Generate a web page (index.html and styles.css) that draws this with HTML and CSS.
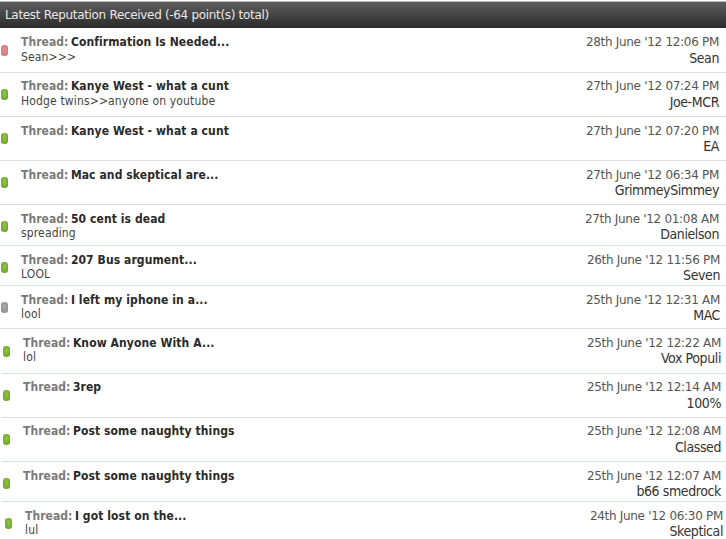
FILE: index.html
```html
<!DOCTYPE html>
<html lang="en">
<head>
<meta charset="utf-8">
<title>Latest Reputation Received</title>
<link rel="stylesheet" href="styles.css">
</head>
<body>
<div class="panel">
  <div class="head">Latest Reputation Received (-64 point(s) total)</div>
  <div class="row r1"><span class="pip neg"></span><div class="main"><div class="title"><span class="lbl">Thread:</span> <b>Confirmation Is Needed...</b></div><div class="note">Sean&gt;&gt;&gt;</div></div><div class="meta"><div class="date">28th June '12 12:06 PM</div><div class="who">Sean</div></div></div>
  <div class="row r2"><span class="pip pos"></span><div class="main"><div class="title"><span class="lbl">Thread:</span> <b>Kanye West - what a cunt</b></div><div class="note">Hodge twins&gt;&gt;anyone on youtube</div></div><div class="meta"><div class="date">27th June '12 07:24 PM</div><div class="who">Joe-MCR</div></div></div>
  <div class="row r3"><span class="pip pos"></span><div class="main"><div class="title"><span class="lbl">Thread:</span> <b>Kanye West - what a cunt</b></div></div><div class="meta"><div class="date">27th June '12 07:20 PM</div><div class="who">EA</div></div></div>
  <div class="row r4"><span class="pip pos"></span><div class="main"><div class="title"><span class="lbl">Thread:</span> <b>Mac and skeptical are...</b></div></div><div class="meta"><div class="date">27th June '12 06:34 PM</div><div class="who">GrimmeySimmey</div></div></div>
  <div class="row r5"><span class="pip pos"></span><div class="main"><div class="title"><span class="lbl">Thread:</span> <b>50 cent is dead</b></div><div class="note">spreading</div></div><div class="meta"><div class="date">27th June '12 01:08 AM</div><div class="who">Danielson</div></div></div>
  <div class="row r6"><span class="pip pos"></span><div class="main"><div class="title"><span class="lbl">Thread:</span> <b>207 Bus argument...</b></div><div class="note">LOOL</div></div><div class="meta"><div class="date">26th June '12 11:56 PM</div><div class="who">Seven</div></div></div>
  <div class="row r7"><span class="pip neu"></span><div class="main"><div class="title"><span class="lbl">Thread:</span> <b>I left my iphone in a...</b></div><div class="note">lool</div></div><div class="meta"><div class="date">25th June '12 12:31 AM</div><div class="who">MAC</div></div></div>
  <div class="row r8"><span class="pip pos"></span><div class="main"><div class="title"><span class="lbl">Thread:</span> <b>Know Anyone With A...</b></div><div class="note">lol</div></div><div class="meta"><div class="date">25th June '12 12:22 AM</div><div class="who">Vox Populi</div></div></div>
  <div class="row r9"><span class="pip pos"></span><div class="main"><div class="title"><span class="lbl">Thread:</span> <b>3rep</b></div></div><div class="meta"><div class="date">25th June '12 12:14 AM</div><div class="who">100%</div></div></div>
  <div class="row r10"><span class="pip pos"></span><div class="main"><div class="title"><span class="lbl">Thread:</span> <b>Post some naughty things</b></div></div><div class="meta"><div class="date">25th June '12 12:08 AM</div><div class="who">Classed</div></div></div>
  <div class="row r11"><span class="pip pos"></span><div class="main"><div class="title"><span class="lbl">Thread:</span> <b>Post some naughty things</b></div></div><div class="meta"><div class="date">25th June '12 12:07 AM</div><div class="who">b66 smedrock</div></div></div>
  <div class="row r12"><span class="pip pos"></span><div class="main"><div class="title"><span class="lbl">Thread:</span> <b>I got lost on the...</b></div><div class="note">lul</div></div><div class="meta"><div class="date">24th June '12 06:30 PM</div><div class="who">Skeptical</div></div></div>
</div>
</body>
</html>
```
FILE: styles.css
```css
html, body { margin: 0; padding: 0; background: #fff; }
body { width: 726px; height: 539px; overflow: hidden; font-family: "DejaVu Sans", Verdana, sans-serif; }
.head { height: 25px; line-height: 26px; margin-top: 1px; padding-left: 5px; color: #e8e8e8; font-size: 12px; letter-spacing: -0.32px; background: linear-gradient(#5e5e5e, #2c2c2c); border-top: 1px solid #bbb; box-shadow: 0 1px 0 #2c2c2c; margin-bottom: 1px; }
.row { display: flex; border-bottom: 1px solid #d8e0e6; box-sizing: border-box; padding-right: 7px; }
.pip { flex: none; width: 7px; height: 11px; border-radius: 3px; margin: 16px 13px 0 1px; }
.pos { background: radial-gradient(ellipse at 50% 40%, #90c840, #659a25); }
.neg { background: radial-gradient(ellipse at 50% 40%, #e48e92, #cf7076); }
.neu { background: radial-gradient(ellipse at 50% 40%, #aaa, #888); }
.main { flex: 1; padding-top: 7px; }
.title { font-family: "DejaVu Sans Condensed", "DejaVu Sans", sans-serif; font-size: 12px; line-height: 15px; color: #2a2a2a; letter-spacing: 0.05px; }
.title b { margin-left: -1px; letter-spacing: 0.1px; }
.lbl { color: #7a7a7a; font-weight: bold; }
.note { font-family: "DejaVu Sans Condensed", "DejaVu Sans", sans-serif; font-size: 12px; line-height: 15px; margin-top: -1px; color: #444; letter-spacing: 0.15px; }
.meta { padding-top: 7px; text-align: right; }
.date { font-size: 12px; line-height: 15px; color: #555; letter-spacing: -0.3px; }
.who { font-family: "DejaVu Sans Condensed", "DejaVu Sans", sans-serif; font-size: 14px; line-height: 17px; margin-top: -1px; color: #333; letter-spacing: -0.4px; }
.r1 { height: 45px; }
.r1 .pip, .r8 .pip { margin-top: 17px; }
.r1 .note, .r2 .note { margin-top: 0; }
.r1 .who, .r2 .who, .r9 .who, .r10 .who { margin-top: 0; }
.r2 .main, .r2 .meta, .r9 .main, .r9 .meta, .r10 .main, .r10 .meta { padding-top: 6px; }
.r2, .r3, .r4, .r9, .r10 { height: 44px; }
.r5 { height: 41px; }
.r6 { height: 40px; padding-right: 6px; }
.r7 { height: 43px; padding-right: 6px; }
.r8 { height: 45px; margin-left: 2px; padding-right: 5px; }
.r9, .r10 { margin-left: 2px; padding-right: 5px; }
.r11 { height: 40px; margin-left: 2px; padding-right: 5px; }
.r12 { margin-left: 4px; padding-right: 3px; }
```
